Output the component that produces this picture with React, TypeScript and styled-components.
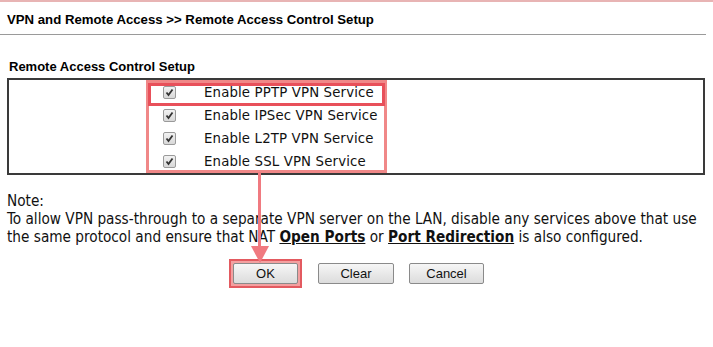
import React from "react";
import styled, { createGlobalStyle } from "styled-components";

const Global = createGlobalStyle`
  html, body { margin: 0; padding: 0; background: #fff; }
  body { width: 713px; height: 347px; overflow: hidden; }
`;

const Page = styled.div`
  position: relative;
  width: 713px;
  height: 347px;
  border-top: 2px solid #e8b4b4;
  box-sizing: border-box;
  font-family: "Liberation Sans", Arial, sans-serif;
  color: #000;
`;

const Title = styled.div`
  font-weight: bold;
  font-size: 13.2px;
  padding: 10px 0 0 7px;
  height: 22px;
  border-bottom: 1px solid #9a9a9a;
  margin-right: 7px;
`;

const SectionTitle = styled.div`
  font-weight: bold;
  font-size: 13px;
  margin: 24px 0 0 9px;
  line-height: 16px;
`;

const Box = styled.div`
  margin: 3px 8px 0 7px;
  height: 97px;
  border: 2px solid #3a3a3a;
  box-sizing: border-box;
  position: relative;
`;

const List = styled.div`
  display: flex;
  flex-direction: column;
  padding: 1px 0 0 154px;
`;

const Row = styled.label`
  display: flex;
  align-items: center;
  height: 23px;
  font-family: "DejaVu Sans", Verdana, sans-serif;
  font-size: 13.3px;
  letter-spacing: 0.15px;
  color: #111;
`;

const Check = styled.span`
  width: 11px;
  height: 11px;
  border: 1px solid #9a9a9a;
  border-radius: 2px;
  background: linear-gradient(#f2f2f2, #d8d8d8);
  display: flex;
  align-items: center;
  justify-content: center;
  margin-right: 28px;
`;

const Highlight = styled.div<{ $strong?: boolean }>`
  position: absolute;
  border: 3px solid ${(p) => (p.$strong ? "#e8505a" : "#f08888")};
  box-sizing: border-box;
`;

const Note = styled.div`
  margin: 17px 0 0 7px;
  font-family: "DejaVu Sans Condensed", "DejaVu Sans", sans-serif;
  font-stretch: condensed;
  font-size: 15.2px;
  line-height: 18px;
  color: #111;
`;

const Link = styled.a`
  font-weight: bold;
  text-decoration: underline;
  color: #111;
`;

const Buttons = styled.div`
  display: flex;
  align-items: center;
  margin-top: 17px;
  padding-left: 229px;
`;

const Button = styled.button<{ $w?: number; $ml?: number }>`
  width: ${(p) => p.$w ?? 76}px;
  margin-left: ${(p) => p.$ml ?? 0}px;
  height: 21px;
  font-family: "Liberation Sans", Arial, sans-serif;
  font-size: 13px;
  color: #111;
  border: 1px solid #8a8a8a;
  border-radius: 2px;
  background: linear-gradient(#f6f6f6, #dcdcdc);
  padding: 0;
`;

const OkWrap = styled.div`
  padding: 2px;
  border: 2px solid #e35a60;
  background: #f3a0a0;
  display: flex;
  margin: -4px 0;
`;

const Arrow = styled.svg`
  position: absolute;
  left: 250px;
  top: 170px;
`;

const items = ["PPTP", "IPSec", "L2TP", "SSL"];

export default function App() {
  return (
    <>
      <Global />
      <Page>
        <Title>VPN and Remote Access &gt;&gt; Remote Access Control Setup</Title>
        <SectionTitle>Remote Access Control Setup</SectionTitle>
        <Box>
          <List>
            {items.map((t) => (
              <Row key={t}>
                <Check>
                  <svg width="9" height="9" viewBox="0 0 9 9">
                    <path d="M1.5 4.5 L3.5 7 L7.5 1.5" stroke="#333" strokeWidth="1.8" fill="none" />
                  </svg>
                </Check>
                Enable {t} VPN Service
              </Row>
            ))}
          </List>
        </Box>
        <Highlight style={{ left: 146, top: 78, width: 241, height: 93 }} />
        <Highlight $strong style={{ left: 148, top: 81, width: 237, height: 23 }} />
        <Note>
          <div>Note:</div>
          <div>
            To allow VPN pass-through to a separate VPN server on the LAN, disable any services above that use
            <br />
            the same protocol and ensure that NAT <Link>Open Ports</Link> or <Link>Port Redirection</Link> is also configured.
          </div>
        </Note>
        <Buttons>
          <OkWrap>
            <Button $w={65}>OK</Button>
          </OkWrap>
          <Button $ml={16}>Clear</Button>
          <Button $w={75} $ml={15}>Cancel</Button>
        </Buttons>
        <Arrow width="20" height="95" viewBox="0 0 20 95">
          <rect x="8" y="0" width="3" height="78" fill="#f07a80" />
          <path d="M1 74 L19 74 L10 91 Z" fill="#f07a80" />
        </Arrow>
      </Page>
    </>
  );
}
